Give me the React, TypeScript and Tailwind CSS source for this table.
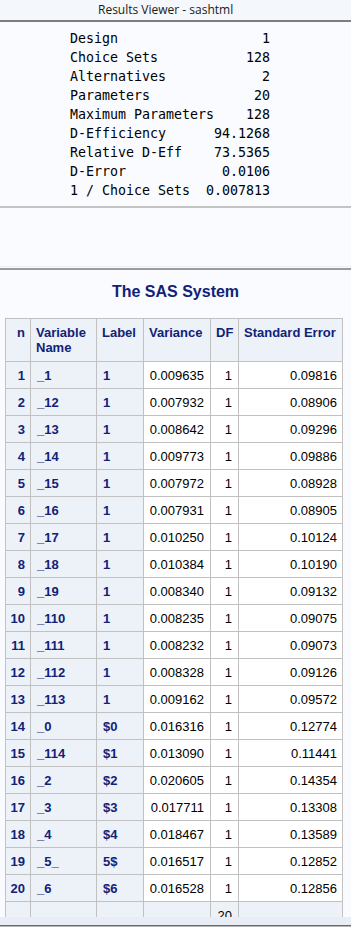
import React from "react";

const stats: [string, string][] = [
  ["Design", "1"],
  ["Choice Sets", "128"],
  ["Alternatives", "2"],
  ["Parameters", "20"],
  ["Maximum Parameters", "128"],
  ["D-Efficiency", "94.1268"],
  ["Relative D-Eff", "73.5365"],
  ["D-Error", "0.0106"],
  ["1 / Choice Sets", "0.007813"],
];

const rows: [string, string, string, string, string, string][] = [
  ["1", "_1", "1", "0.009635", "1", "0.09816"],
  ["2", "_12", "1", "0.007932", "1", "0.08906"],
  ["3", "_13", "1", "0.008642", "1", "0.09296"],
  ["4", "_14", "1", "0.009773", "1", "0.09886"],
  ["5", "_15", "1", "0.007972", "1", "0.08928"],
  ["6", "_16", "1", "0.007931", "1", "0.08905"],
  ["7", "_17", "1", "0.010250", "1", "0.10124"],
  ["8", "_18", "1", "0.010384", "1", "0.10190"],
  ["9", "_19", "1", "0.008340", "1", "0.09132"],
  ["10", "_110", "1", "0.008235", "1", "0.09075"],
  ["11", "_111", "1", "0.008232", "1", "0.09073"],
  ["12", "_112", "1", "0.008328", "1", "0.09126"],
  ["13", "_113", "1", "0.009162", "1", "0.09572"],
  ["14", "_0", "$0", "0.016316", "1", "0.12774"],
  ["15", "_114", "$1", "0.013090", "1", "0.11441"],
  ["16", "_2", "$2", "0.020605", "1", "0.14354"],
  ["17", "_3", "$3", "0.017711", "1", "0.13308"],
  ["18", "_4", "$4", "0.018467", "1", "0.13589"],
  ["19", "_5_", "5$", "0.016517", "1", "0.12852"],
  ["20", "_6", "$6", "0.016528", "1", "0.12856"],
];

const th = "border border-[#c1c1c1] bg-[#edf2f9] text-[#112277] font-bold align-top px-[5px] pt-[6px]";
const rh = "border border-[#c1c1c1] bg-[#edf2f9] text-[#112277] font-bold align-middle";
const dat = "border border-[#c1c1c1] bg-white text-black align-middle";
const ft = "border border-[#c1c1c1] bg-[#edf2f9] text-black align-middle";

export default function App() {
  return (
    <div
      className="w-[351px] h-[934px] flex flex-col overflow-hidden bg-white"
      style={{ fontFamily: '"Liberation Sans", Arial, sans-serif' }}
    >
      <div className="h-[22px] shrink-0 bg-[#f4f7fc] border-b-2 border-[#7d7d7d] flex items-center pl-[98px]">
        <span className="text-[12px] text-[#1a1a1a]" style={{ fontFamily: '"Open Sans", "Noto Sans", sans-serif' }}>
          Results Viewer - sashtml
        </span>
      </div>
      <div className="flex-1 min-h-0 overflow-hidden bg-[#fafbfe]">
        <div
          className="pt-[7px] pl-[70px] text-[13.3px] leading-[19px] text-black"
          style={{ fontFamily: '"DejaVu Sans Mono", monospace' }}
        >
          {stats.map(([k, v]) => (
            <div key={k} className="w-[200px] flex justify-between whitespace-pre">
              <span>{k}</span>
              <span>{v}</span>
            </div>
          ))}
        </div>
        <div className="mt-[6px] h-[2px] bg-[#c4c4c4]" />
        <div className="h-[59px] border-b border-[#eceef3]" />
        <div className="mt-[1px] h-[2px] bg-[#9a9a9a]" />
        <div className="mt-[12px] text-center text-[16px] font-bold text-[#112277] leading-[20px]">
          The SAS System
        </div>
        <div className="mt-[16px] pl-[5px]">
          <table className="border-collapse table-fixed text-[13px] leading-[15px]" style={{ width: 337 }}>
            <colgroup>
              <col style={{ width: 25 }} />
              <col style={{ width: 66 }} />
              <col style={{ width: 47 }} />
              <col style={{ width: 67 }} />
              <col style={{ width: 28 }} />
              <col style={{ width: 104 }} />
            </colgroup>
            <thead>
              <tr className="h-[43px]">
                <th className={`${th} text-right`}>n</th>
                <th className={`${th} text-left`}>Variable Name</th>
                <th className={`${th} text-left`}>Label</th>
                <th className={`${th} text-left`}>Variance</th>
                <th className={`${th} text-left`}>DF</th>
                <th className={`${th} text-left`}>Standard Error</th>
              </tr>
            </thead>
            <tbody>
              {rows.map((r) => (
                <tr key={r[0]} className="h-[27px]">
                  <td className={`${rh} text-right pr-[5px]`}>{r[0]}</td>
                  <td className={`${rh} text-left pl-[6px]`}>{r[1]}</td>
                  <td className={`${rh} text-left pl-[6px]`}>{r[2]}</td>
                  <td className={`${dat} text-right pr-[6px]`}>{r[3]}</td>
                  <td className={`${dat} text-right pr-[6px]`}>{r[4]}</td>
                  <td className={`${dat} text-right pr-[5px]`}>{r[5]}</td>
                </tr>
              ))}
              <tr className="h-[27px]">
                <td className={ft}></td>
                <td className={ft}></td>
                <td className={ft}></td>
                <td className={ft}></td>
                <td className={`${ft} text-right pr-[6px]`}>20</td>
                <td className={ft}></td>
              </tr>
            </tbody>
          </table>
        </div>
      </div>
      <div className="h-[8px] shrink-0 bg-[#e9eef6]" />
      <div className="h-[1px] shrink-0 bg-[#6a6a6a]" />
      <div className="h-[1px] shrink-0 bg-[#b5b5b5]" />
      <div className="h-[7px] shrink-0 bg-white" />
    </div>
  );
}
